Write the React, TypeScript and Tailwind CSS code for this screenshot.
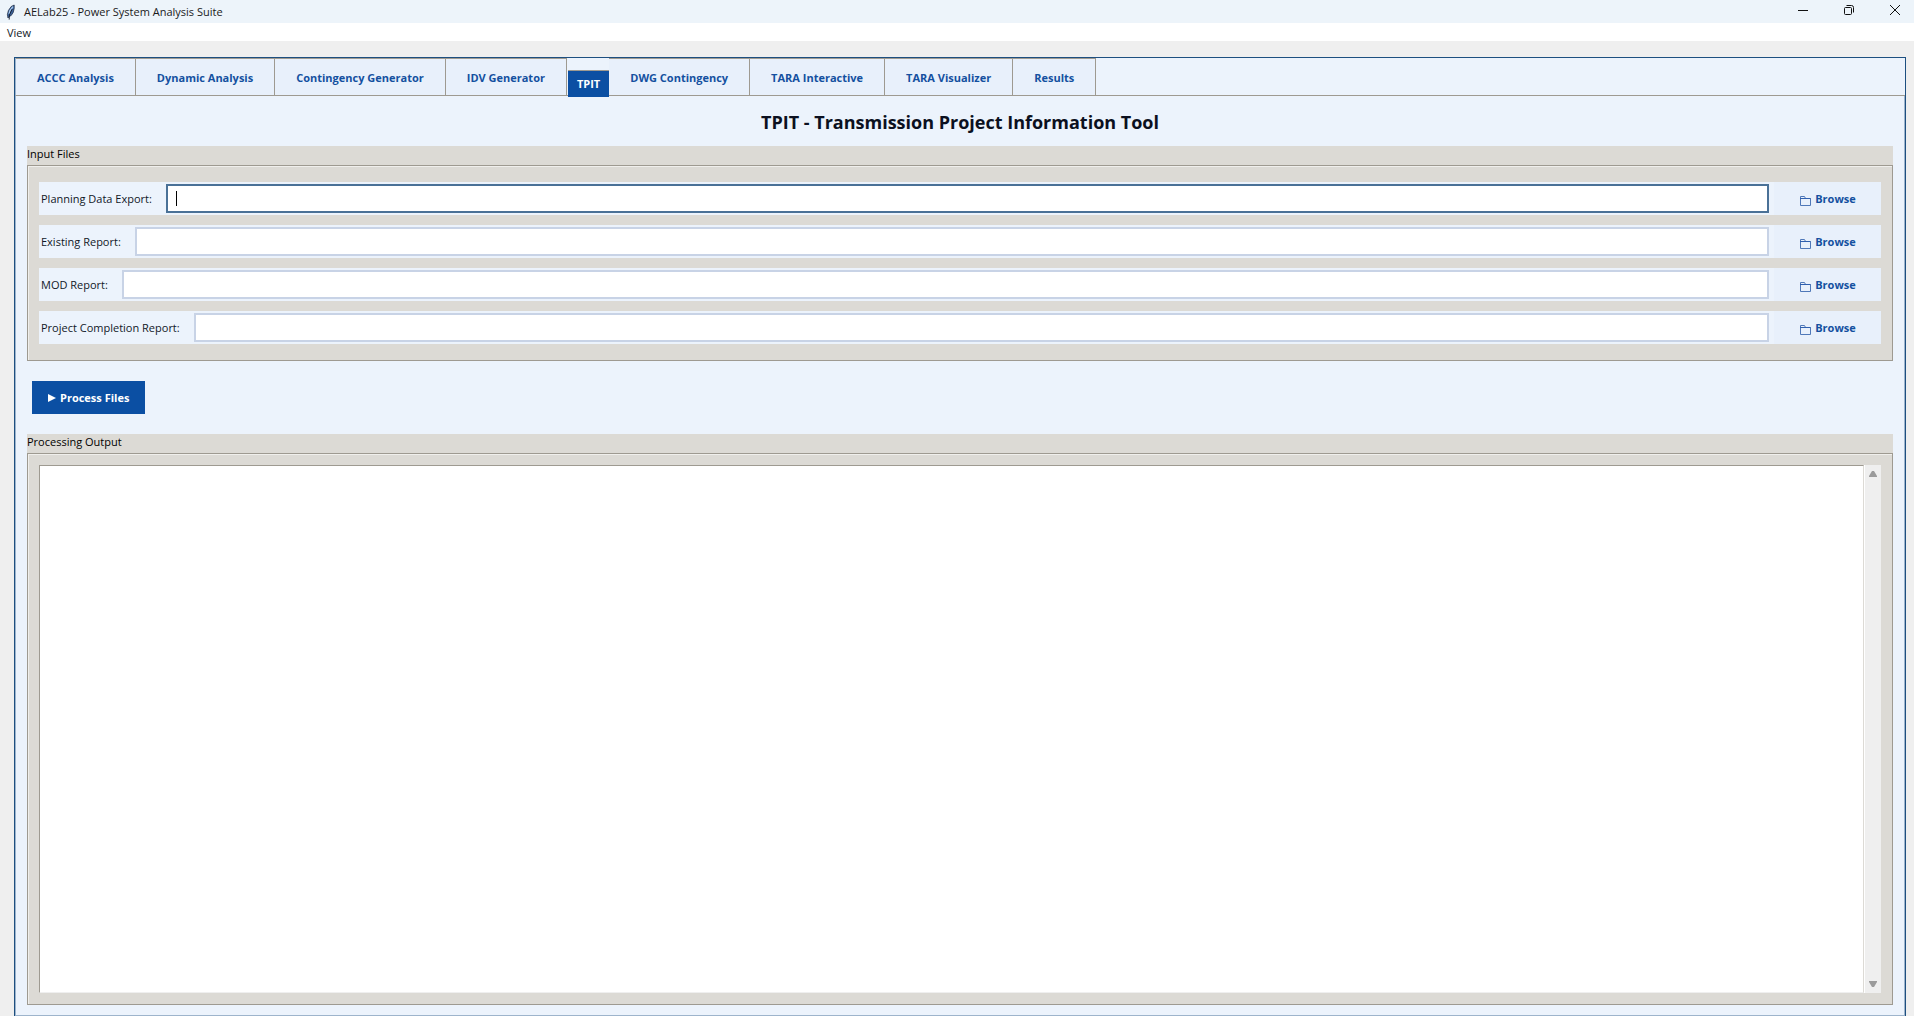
import React from 'react';
const tabs = ['ACCC Analysis', 'Dynamic Analysis', 'Contingency Generator', 'IDV Generator', 'TPIT', 'DWG Contingency', 'TARA Interactive', 'TARA Visualizer', 'Results'];
const inputFiles = [{
  id: 'planning',
  label: 'Planning Data Export:'
}, {
  id: 'existing',
  label: 'Existing Report:'
}, {
  id: 'mod',
  label: 'MOD Report:'
}, {
  id: 'completion',
  label: 'Project Completion Report:'
}];
const FeatherIcon = () => <svg className="w-4 h-4" viewBox="0 0 16 16" aria-hidden="true">
    <path d="M4 14 L3.4 10.5 L4.4 6.5 L7.2 2.5 L10.2 1 L10.2 4.5 L9.2 8.5 L7.2 11.5 L5 12.5 Z" fill="#3c639b" stroke="#16223a" strokeWidth="0.7" />
    <path d="M5 10 L6 6.5 L9 2.6" fill="none" stroke="#a8c8ee" strokeWidth="1.3" />
    <path d="M5.2 15.6 L5.4 11 L8.2 5" fill="none" stroke="#10182a" strokeWidth="0.9" />
  </svg>;
const FolderIcon = () => <svg className="w-3 h-3 relative top-0.5" viewBox="0 0 12 12" fill="none" stroke="#4f78b8" aria-hidden="true">
    <path d="M1.5 10.5 V1.5 H5.5 L6.5 3.5 H11.5 V10.5 Z" />
    <path d="M1 3.5 H11.5" stroke="#2f5fae" />
  </svg>;
const TitleBar = () => <header className="h-[23px] flex items-center justify-between bg-[#edf4fa] pl-1">
    <div className="flex items-center">
      <FeatherIcon />
      <h1 className="ml-1 text-[#1a1a1a]">AELab25 - Power System Analysis Suite</h1>
    </div>
    <div className="h-full flex items-start -mr-1">
      <button aria-label="Minimize" className="w-[46px] h-5 flex items-center justify-center">
        <svg className="w-3 h-3" viewBox="0 0 12 12" stroke="#111"><path d="M1 6.5 H11" /></svg>
      </button>
      <button aria-label="Restore" className="w-[46px] h-5 flex items-center justify-center">
        <svg className="w-3 h-3" viewBox="0 0 12 12" fill="none" stroke="#111">
          <rect x="1.5" y="3.5" width="7" height="7" rx="1" />
          <path d="M3.5 1.5 H8.5 Q10.5 1.5 10.5 3.5 V8.5" />
        </svg>
      </button>
      <button aria-label="Close" className="w-[46px] h-5 flex items-center justify-center">
        <svg className="w-3 h-3" viewBox="0 0 12 12" stroke="#111"><path d="M1 1 L11 11 M11 1 L1 11" /></svg>
      </button>
    </div>
  </header>;
const App = () => {
  return <div className="h-screen flex flex-col bg-[#efefef] font-['Open_Sans','Noto_Sans',sans-serif] text-[11px] leading-4 text-[#111827]">
      <TitleBar />
      <nav className="h-[18px] bg-white flex items-end px-[7px]">
        <button>View</button>
      </nav>
      <main className="flex-1 min-h-0 mt-4 ml-3.5 mr-2 flex flex-col border border-b-0 border-[#1d4f80] bg-[#ecf3fc]">
        <div role="tablist" className="flex items-end h-[38px] border-b border-[#9e9a91] border-l border-l-[#9db4cc] font-bold">
          {tabs.map(tab => tab === 'TPIT' ? <button key={tab} role="tab" aria-selected="true" className="peer h-[27px] px-[9px] -mb-0.5 ml-px border-t border-[#9e9a91] bg-[#0b4fa3] text-white">
                {tab}
              </button> : <button key={tab} role="tab" aria-selected="false" className="h-[37px] px-[21px] pt-0.5 border-t border-r border-[#9e9a91] bg-[#e8f0fb] text-[#1450a0] peer-[+&]:border-l">
                {tab}
              </button>)}
        </div>
        <section className="flex-1 min-h-0 flex flex-col px-[11px] pb-[10px] border-x border-b border-[#9db4cc]">
          <h2 className="h-[50px] pt-0.5 flex items-center justify-center text-[18px] font-bold text-[#0b1020]">
            TPIT - Transmission Project Information Tool
          </h2>
          <fieldset className="bg-[#dcdad5]">
            <legend className="float-left w-full h-[19px] text-black">Input Files</legend>
            <div className="clear-both flex flex-col gap-2.5 border border-[#9e9a91] shadow-[inset_1px_1px_0_#f0efec] px-[11px] py-4">
              {inputFiles.map((file, index) => <div key={file.id} className="h-[33px] flex items-center bg-[#ecf3fc] pl-0.5">
                  <label htmlFor={file.id} className="mr-3.5">{file.label}</label>
                  <div className="relative flex-1">
                    <input id={file.id} type="text" autoFocus={index === 0} className="block w-full h-[29px] px-2 bg-white border-2 border-[#c8d3e6] outline-none caret-transparent focus:border-[#4a7197]" />
                    {index === 0 && <span className="absolute left-2.5 top-[7px] w-px h-[15px] bg-black" />}
                  </div>
                  <button className="ml-[5px] w-[107px] h-full flex items-center justify-center gap-1 bg-[#e8f0fb] font-bold text-[#1450a0]">
                    <FolderIcon />
                    Browse
                  </button>
                </div>)}
            </div>
          </fieldset>
          <div className="px-[5px] py-5">
            <button className="h-[33px] px-4 flex items-center gap-1 bg-[#0b4fa3] font-bold text-white">
              <svg className="w-2 h-2" viewBox="0 0 8 8" fill="currentColor" aria-hidden="true"><path d="M0 0 L8 4 L0 8 Z" /></svg>
              Process Files
            </button>
          </div>
          <div className="flex-1 min-h-0 flex flex-col bg-[#dcdad5]">
            <label htmlFor="output" className="h-[19px] text-black">Processing Output</label>
            <div className="flex-1 min-h-0 flex border border-[#9e9a91] shadow-[inset_1px_1px_0_#f0efec] p-[11px]">
              <textarea id="output" className="flex-1 resize-none overflow-hidden outline-none bg-white border border-t-[#9e9a91] border-l-[#9e9a91] border-r-[#dcdad5] border-b-[#efefef]" />
              <div className="w-[17px] flex flex-col items-center justify-between bg-[#efefef] border-l border-white py-1.5" aria-hidden="true">
                <svg className="w-2 h-1.5" viewBox="0 0 8 6" fill="#9b9b9b"><path d="M0 6 V5 L3 0 H5 L8 5 V6 Z" /></svg>
                <svg className="w-2 h-1.5" viewBox="0 0 8 6" fill="#9b9b9b"><path d="M0 0 V1 L3 6 H5 L8 1 V0 Z" /></svg>
              </div>
            </div>
          </div>
        </section>
      </main>
    </div>;
};
export default App;
